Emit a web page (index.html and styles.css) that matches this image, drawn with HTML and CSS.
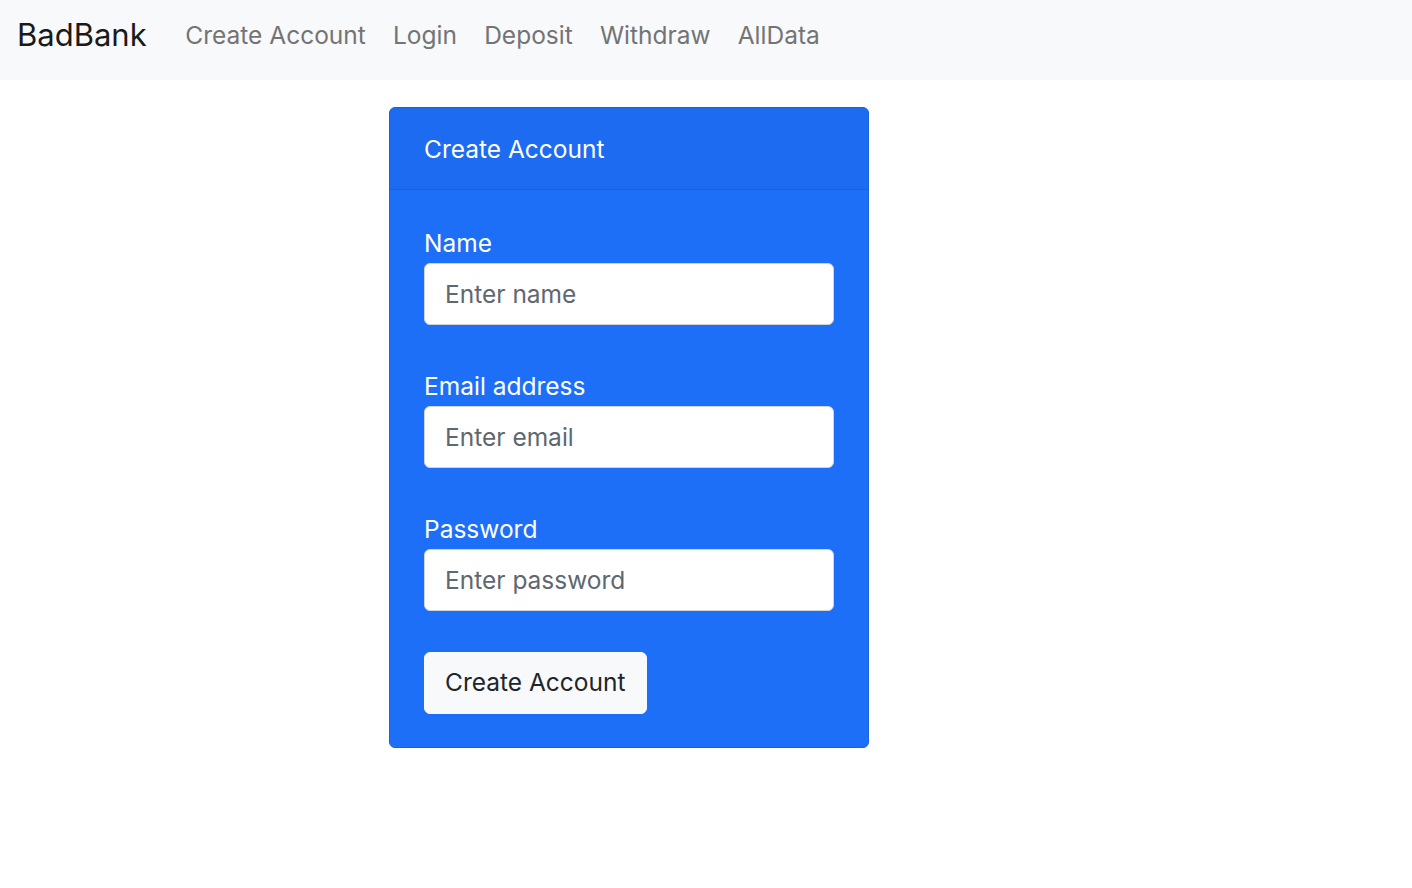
FILE: index.html
```html
<!DOCTYPE html>
<html lang="en">
<head>
<meta charset="utf-8">
<title>BadBank</title>
<link rel="stylesheet" href="styles.css">
</head>
<body>
<nav class="navbar">
  <a class="brand" href="#">BadBank</a>
  <ul class="nav">
    <li><a class="nav-link" href="#">Create Account</a></li>
    <li><a class="nav-link" href="#">Login</a></li>
    <li><a class="nav-link" href="#">Deposit</a></li>
    <li><a class="nav-link" href="#">Withdraw</a></li>
    <li><a class="nav-link" href="#">AllData</a></li>
  </ul>
</nav>
<main class="container">
  <div class="card">
    <div class="card-header">Create Account</div>
    <div class="card-body">
      Name<br>
      <input type="text" class="form-control" placeholder="Enter name"><br>
      Email address<br>
      <input type="text" class="form-control" placeholder="Enter email"><br>
      Password<br>
      <input type="password" class="form-control" placeholder="Enter password"><br>
      <button type="button" class="btn-light">Create Account</button>
    </div>
  </div>
</main>
</body>
</html>
```
FILE: styles.css
```css
html, body {
  margin: 0;
  padding: 0;
  background: #ffffff;
}
body {
  font-family: Inter, "Noto Sans", "Liberation Sans", sans-serif;
  font-size: 24.5px;
  line-height: 40.5px;
  color: #212529;
}
.navbar {
  display: flex;
  align-items: center;
  height: 80px;
  background: #f8f9fa;
  padding: 0 0 0 17px;
  box-sizing: border-box;
}
.brand {
  font-size: 31px;
  color: #1a1a1a;
  text-decoration: none;
  margin-right: 25px;
  line-height: 40px;
  position: relative;
  top: -5px;
}
.nav {
  display: flex;
  list-style: none;
  margin: 0;
  padding: 0;
  position: relative;
  top: -5px;
}
.nav-link {
  display: block;
  padding: 0 13.6px;
  color: #737475;
  text-decoration: none;
}
.container {
  padding: 27px 0 0 389px;
}
.card {
  width: 480px;
  box-sizing: border-box;
  background: #1e6ff8;
  border: 1px solid #1a62dc;
  border-radius: 6px;
  color: #ffffff;
  overflow: hidden;
}
.card-header {
  padding: 21px 33px 19px 34px;
  background: #1d6bf0;
  border-bottom: 1px solid #1a60d8;
}
.card-body {
  padding: 33px 34px 33px 34px;
}
.form-control {
  display: block;
  width: 100%;
  box-sizing: border-box;
  height: 62px;
  padding: 0 20px;
  font: inherit;
  color: #212529;
  background: #ffffff;
  border: 1px solid #ced4da;
  border-radius: 6px;
  outline: none;
}
.form-control::placeholder {
  color: #5f6770;
  opacity: 1;
}
.btn-light {
  display: inline-block;
  height: 62px;
  padding: 0 20px;
  font: inherit;
  color: #212529;
  background: #f8f9fa;
  border: 1px solid #f8f9fa;
  border-radius: 6px;
  vertical-align: top;
}
```
